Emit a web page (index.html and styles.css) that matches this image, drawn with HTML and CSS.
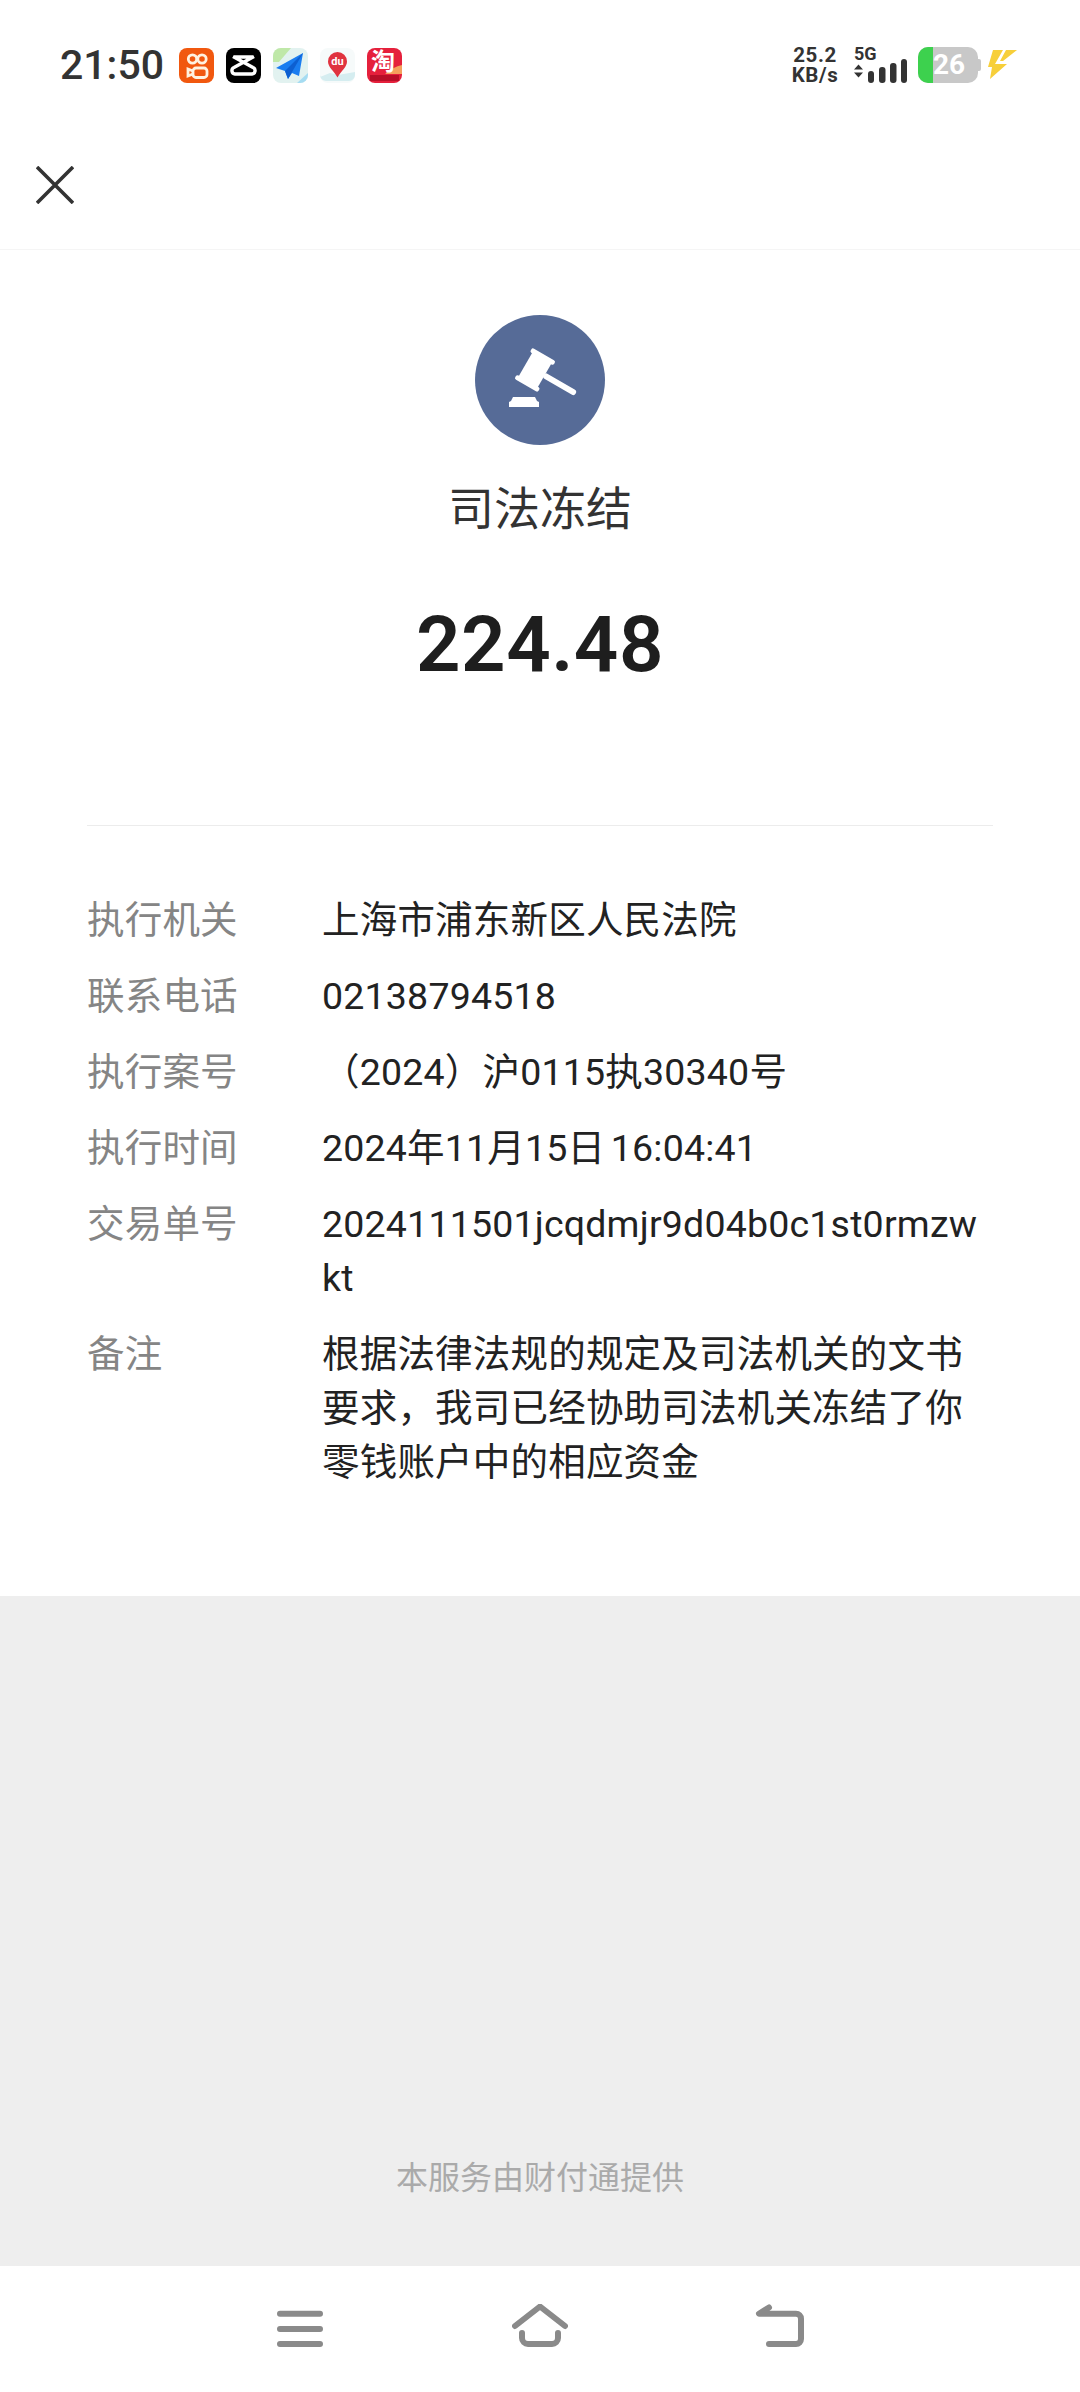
FILE: index.html
```html
<!doctype html>
<html lang="zh">
<head>
  <meta charset="utf-8">
  <title>司法冻结</title>
  <link rel="stylesheet" href="styles.css">
</head>
<body>
  <div class="page">
    <div class="statusbar">
      <div class="status-left">
        <span class="time">21:50</span>
        <div class="app-icons">
          <svg class="app" viewBox="0 0 35 35"><rect width="35" height="35" rx="8" fill="#f1580f"/><g fill="none" stroke="#fff2e0" stroke-width="2.800"><circle cx="13.500" cy="11" r="4.200"/><circle cx="23" cy="11" r="4.200"/><rect x="14" y="20" width="14" height="9.500" rx="3"/><path d="M14 23l-5-2v7l5-2"/></g></svg>
          <svg class="app" viewBox="0 0 35 35"><rect width="35" height="35" rx="8" fill="#000"/><path d="M7 8.500l20 11a3.400 3.400 0 0 1-1 6.500H9a3.400 3.400 0 0 1-1-6.500L28 8.500M8 9h19" fill="none" stroke="#fff" stroke-width="3.400"/></svg>
          <svg class="app" viewBox="0 0 35 35"><rect width="35" height="35" rx="8" fill="#e2f2f0"/><path d="M0 8a8 8 0 0 1 8-8h10L6 14H0z" fill="#bfe8a8"/><path d="M24 35l11-10v2a8 8 0 0 1-8 8z" fill="#a5dcf2"/><path d="M30 5L3 20l9 3 3 8 4-6 7 3z" fill="#1a7df0"/><path d="M12 23l18-18-15 26z" fill="#0d5fd0"/></svg>
          <svg class="app" viewBox="0 0 35 35"><rect width="35" height="35" rx="8" fill="#f6fafa"/><path d="M0 29l10-4 8 2 17-3v3a6 6 0 0 1-6 6H6a6 6 0 0 1-6-6z" fill="#d5edf0"/><path d="M17.500 4a9.500 9.500 0 0 1 9.500 9.500c0 5.500-5.500 9-9.500 16-4-7-9.500-10.500-9.500-16a9.500 9.500 0 0 1 9.500-9.500z" fill="#e0333f"/><text class="du" x="17.500" y="17">du</text></svg>
          <svg class="app" viewBox="0 0 35 35"><rect width="35" height="35" rx="8" fill="#e5203c"/><path d="M18 26q8-7 17-9v9z" fill="#f5a05c"/><rect x="3" y="27" width="29" height="6" fill="#b80f28"/><text class="tao" x="16" y="22">淘</text></svg>
        </div>
      </div>
      <div class="status-right">
        <div class="speed"><span>25.2</span><span>KB/s</span></div>
        <div class="signal">
          <span class="net">5G</span>
          <svg class="bars" viewBox="0 0 53 24"><path d="M0 10.500l4.500-5 4.500 5zM0 13.500l4.500 5 4.500-5z" fill="#333"/><rect x="14" y="12" width="6" height="12" rx="3" fill="#333"/><rect x="25" y="8" width="6.500" height="16" rx="3" fill="#333"/><rect x="36" y="4" width="6.500" height="20" rx="3" fill="#333"/><rect x="47" y="0" width="6" height="24" rx="3" fill="#333"/></svg>
        </div>
        <div class="battery">
          <div class="battery-body"><div class="battery-level"></div><span class="battery-num">26</span></div>
          <div class="battery-cap"></div>
        </div>
        <svg class="bolt" viewBox="0 0 32 32"><path d="M6 1h10L8 15h12L3 30l2-12H1zM19 1h11L16 12h-3z" fill="#f7cf3a"/></svg>
      </div>
    </div>

    <div class="topbar">
      <svg class="close" viewBox="0 0 38 38"><path d="M1 1l36 36M37 1L1 37" stroke="#333" stroke-width="3.600" fill="none"/></svg>
    </div>

    <div class="sheet">
      <div class="summary">
        <div class="badge">
          <svg viewBox="0 0 130 130"><g fill="#fff"><g transform="translate(60 55) rotate(30)"><rect x="-11" y="-15" width="22" height="30"/><rect x="-13.500" y="-18" width="27" height="5" rx="2"/><rect x="-13.500" y="13" width="27" height="5" rx="2"/><rect x="10" y="-3" width="37" height="6" rx="3"/></g><path d="M38 82h22l2 4 2 1v5H34v-5l2-1z"/></g></svg>
        </div>
        <div class="title">司法冻结</div>
        <div class="amount">224.48</div>
      </div>

      <div class="details">
        <div class="row"><div class="label">执行机关</div><div class="value">上海市浦东新区人民法院</div></div>
        <div class="row"><div class="label">联系电话</div><div class="value">02138794518</div></div>
        <div class="row"><div class="label">执行案号</div><div class="value">（2024）沪0115执30340号</div></div>
        <div class="row"><div class="label">执行时间</div><div class="value">2024年11月15日 16:04:41</div></div>
        <div class="row"><div class="label">交易单号</div><div class="value">2024111501jcqdmjr9d04b0c1st0rmzwkt</div></div>
        <div class="row"><div class="label">备注</div><div class="value">根据法律法规的规定及司法机关的文书要求，我司已经协助司法机关冻结了你零钱账户中的相应资金</div></div>
      </div>
    </div>

    <div class="gray">
      <div class="provider">本服务由财付通提供</div>
    </div>

    <div class="navbar">
      <svg class="nav-icon" viewBox="0 0 56 44"><path d="M8 9.700h40M8 25h40M8 40h40" stroke="#8a8a8a" stroke-width="6" stroke-linecap="round" fill="none"/></svg>
      <svg class="nav-icon" viewBox="0 0 56 44"><path d="M3 22L28 2.500 53 22M10 29v5a6 6 0 0 0 6 6h24a6 6 0 0 0 6-6v-5" stroke="#8a8a8a" stroke-width="6" stroke-linecap="round" stroke-linejoin="round" fill="none"/></svg>
      <svg class="nav-icon" viewBox="0 0 56 44"><path d="M17 3.500L7 9.700H44a5 5 0 0 1 5 5V35a5 5 0 0 1-5 5H17" stroke="#8a8a8a" stroke-width="6" stroke-linecap="round" stroke-linejoin="round" fill="none"/></svg>
    </div>
  </div>
</body>
</html>
```
FILE: styles.css
```css
* {
  box-sizing: border-box;
}

body {
  margin: 0;
  background: #fff;
  font-family: Roboto, "Noto Sans CJK SC", sans-serif;
}

.page {
  width: 1080px;
  height: 2392px;
  display: flex;
  flex-direction: column;
}

.statusbar {
  height: 130px;
  padding: 47px 61px 0 60px;
  display: flex;
  justify-content: space-between;
  align-items: flex-start;
  flex-shrink: 0;
}

.status-left {
  display: flex;
  align-items: center;
  height: 36px;
}

.time {
  font-size: 41px;
  font-weight: 500;
  color: #333;
  width: 119px;
}

.app-icons {
  display: flex;
  gap: 12px;
}

.app {
  width: 35px;
  height: 35px;
  display: block;
}

.du {
  font-size: 11px;
  font-weight: 700;
  fill: #fff;
  text-anchor: middle;
}

.tao {
  font-size: 24px;
  font-weight: 700;
  fill: #fff;
  text-anchor: middle;
}

.status-right {
  display: flex;
  align-items: center;
  height: 36px;
}

.speed {
  display: flex;
  flex-direction: column;
  align-items: center;
  color: #333;
  font-size: 20.500px;
  line-height: 20.500px;
  font-weight: 700;
  letter-spacing: 0.6px;
  width: 46px;
}

.signal {
  margin-left: 16px;
  width: 53px;
  height: 36px;
}

.net {
  display: block;
  font-size: 18px;
  line-height: 14px;
  font-weight: 700;
  color: #333;
}

.bars {
  display: block;
  width: 53px;
  height: 24px;
  margin-top: -2px;
}

.battery {
  margin-left: 11px;
  display: flex;
  align-items: center;
}

.battery-body {
  width: 60px;
  height: 36px;
  border-radius: 10px;
  background: #c8c8c8;
  overflow: hidden;
  position: relative;
}

.battery-level {
  width: 15px;
  height: 36px;
  background: #3dd14e;
}

.battery-num {
  position: absolute;
  left: 15px;
  top: 0;
  line-height: 36px;
  font-size: 28px;
  font-weight: 700;
  color: #fff;
}

.battery-cap {
  width: 3px;
  height: 12px;
  background: #c8c8c8;
  border-radius: 0 2px 2px 0;
}

.bolt {
  width: 32px;
  height: 32px;
  margin-left: 6px;
}

.topbar {
  height: 120px;
  padding: 36px 0 0 36px;
  border-bottom: 1px solid #f5f5f5;
  flex-shrink: 0;
}

.close {
  width: 38px;
  height: 38px;
  display: block;
}

.sheet {
  height: 1346px;
  padding: 65px 87px 0 87px;
  flex-shrink: 0;
}

.summary {
  height: 511px;
  border-bottom: 1px solid #ececec;
  display: flex;
  flex-direction: column;
  align-items: center;
}

.badge {
  width: 130px;
  height: 130px;
  border-radius: 50%;
  background: #566b97;
}

.badge svg {
  display: block;
}

.title {
  margin-top: 34px;
  font-size: 46px;
  line-height: 60px;
  color: #333;
}

.amount {
  margin-top: 51px;
  font-size: 78px;
  line-height: 110px;
  font-weight: 600;
  letter-spacing: 0.5px;
  color: #1e1e1e;
}

.details {
  padding-top: 67px;
  display: flex;
  flex-direction: column;
  gap: 22px;
}

.row {
  display: flex;
  font-size: 37.500px;
  line-height: 54px;
  letter-spacing: 0.2px;
}

.label {
  width: 235px;
  flex-shrink: 0;
  color: #858585;
}

.value {
  width: 665px;
  color: #222;
  word-break: break-all;
  word-spacing: -4px;
}

.gray {
  flex: 1;
  background: #eee;
  padding-top: 560px;
}

.provider {
  text-align: center;
  font-size: 32px;
  line-height: 44px;
  color: #aaa;
}

.navbar {
  height: 126px;
  flex-shrink: 0;
  background: #fff;
  padding: 38px 180px 0 180px;
  display: grid;
  grid-template-columns: repeat(3, 240px);
  justify-items: center;
  align-items: start;
}

.nav-icon {
  width: 56px;
  height: 44px;
}
```
